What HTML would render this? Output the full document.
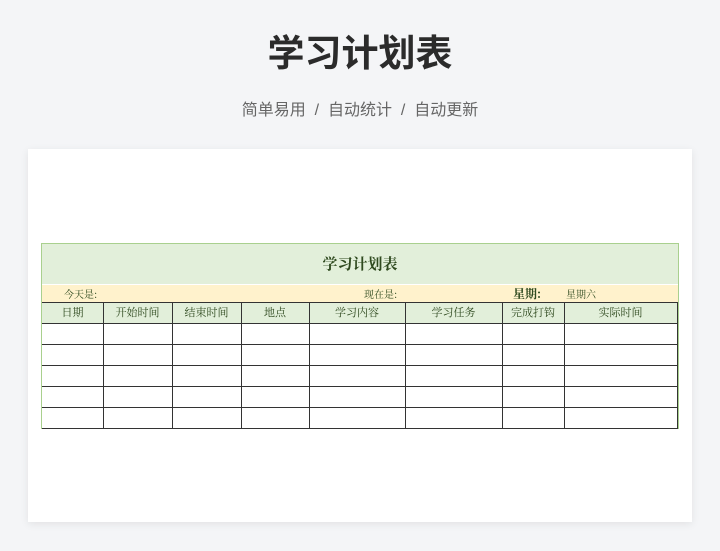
<!DOCTYPE html>
<html><head><meta charset="utf-8"><style>
*{margin:0;padding:0;box-sizing:border-box}
body{width:720px;height:551px;background:#f4f5f7;position:relative;overflow:hidden;font-family:"Liberation Sans","Noto Sans CJK SC",sans-serif}
.t{position:absolute;left:0;width:720px;text-align:center}
.card{position:absolute;left:28px;top:149px;width:664px;height:373px;background:#fff;box-shadow:0 2px 8px rgba(0,0,0,.08)}
.a{position:absolute}
.c{position:absolute;font-family:"Noto Serif CJK SC",serif;font-size:11px;color:#2f4a1f;text-align:center;line-height:21px}
</style></head><body>
<div class="t" style="top:30px;font-size:37px;font-weight:bold;color:#2b2b2b;line-height:48px">学习计划表</div>
<div class="t" style="top:100px;font-size:16px;color:#666;line-height:22px">简单易用 &nbsp;/&nbsp; 自动统计 &nbsp;/&nbsp; 自动更新</div>
<div class="card"></div>
<div class="a" style="left:41px;top:243px;width:638px;height:186px;border:1.5px solid #a9d08e;background:#fff"></div>
<div class="a" style="left:42px;top:244px;width:636px;height:40px;background:#e2efda"></div>
<div class="c" style="left:42px;top:254px;width:636px;font-size:15px;font-weight:bold;line-height:20px">学习计划表</div>
<div class="a" style="left:42px;top:285px;width:636px;height:17px;background:#fff2cc"></div>
<div class="c" style="left:64px;top:285px;line-height:17px;font-size:10px">今天是:</div>
<div class="c" style="left:364px;top:285px;line-height:17px;font-size:10px">现在是:</div>
<div class="c" style="left:513px;top:285px;line-height:17px;font-size:12px;font-weight:bold">星期:</div>
<div class="c" style="left:566px;top:285px;line-height:17px;font-size:10px">星期六</div>
<div class="a" style="left:42px;top:302px;width:636px;height:21px;background:#e2efda"></div>
<div class="a" style="left:42px;top:302px;width:636px;height:1px;background:#333"></div>
<div class="a" style="left:42px;top:323px;width:636px;height:1px;background:#333"></div>
<div class="a" style="left:42px;top:344px;width:636px;height:1px;background:#333"></div>
<div class="a" style="left:42px;top:365px;width:636px;height:1px;background:#333"></div>
<div class="a" style="left:42px;top:386px;width:636px;height:1px;background:#333"></div>
<div class="a" style="left:42px;top:407px;width:636px;height:1px;background:#333"></div>
<div class="a" style="left:42px;top:428px;width:636px;height:1px;background:#333"></div>
<div class="a" style="left:103px;top:302px;width:1px;height:126px;background:#333"></div>
<div class="a" style="left:172px;top:302px;width:1px;height:126px;background:#333"></div>
<div class="a" style="left:241px;top:302px;width:1px;height:126px;background:#333"></div>
<div class="a" style="left:309px;top:302px;width:1px;height:126px;background:#333"></div>
<div class="a" style="left:405px;top:302px;width:1px;height:126px;background:#333"></div>
<div class="a" style="left:502px;top:302px;width:1px;height:126px;background:#333"></div>
<div class="a" style="left:564px;top:302px;width:1px;height:126px;background:#333"></div>
<div class="a" style="left:677px;top:302px;width:1px;height:126px;background:#333"></div>
<div class="c" style="left:42px;top:302px;width:61px">日期</div>
<div class="c" style="left:103px;top:302px;width:69px">开始时间</div>
<div class="c" style="left:172px;top:302px;width:69px">结束时间</div>
<div class="c" style="left:241px;top:302px;width:68px">地点</div>
<div class="c" style="left:309px;top:302px;width:96px">学习内容</div>
<div class="c" style="left:405px;top:302px;width:97px">学习任务</div>
<div class="c" style="left:502px;top:302px;width:62px">完成打钩</div>
<div class="c" style="left:564px;top:302px;width:113px">实际时间</div>
</body></html>
